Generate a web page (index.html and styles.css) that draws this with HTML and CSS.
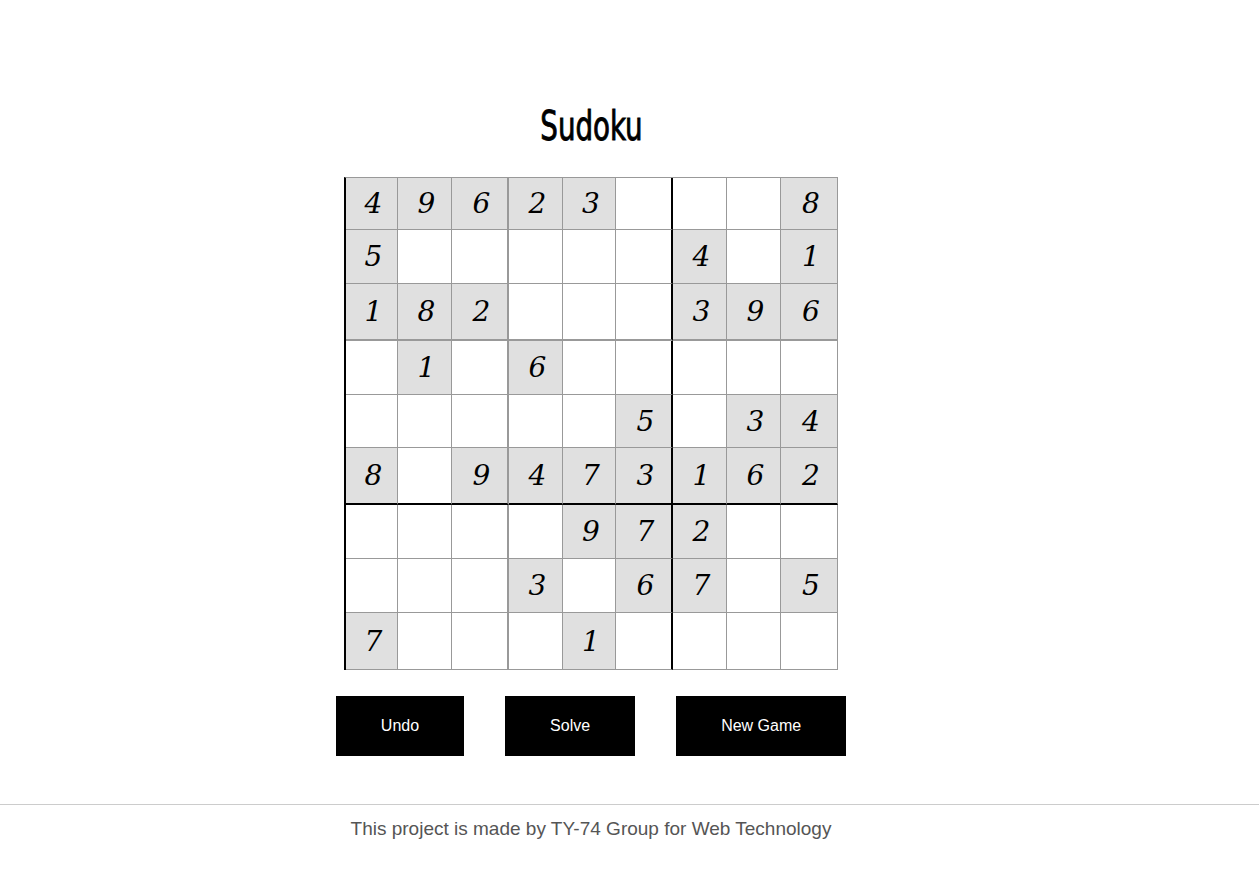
FILE: index.html
```html
<!DOCTYPE html>
<html lang="en">
<head>
<meta charset="utf-8">
<title>Sudoku</title>
<link rel="stylesheet" href="styles.css">
</head>
<body>
<main class="page">
  <h1 class="title">Sudoku</h1>
  <div class="board" id="board"></div>
  <div class="actions">
    <button class="btn">Undo</button>
    <button class="btn">Solve</button>
    <button class="btn">New Game</button>
  </div>
</main>
<footer class="footer">
  <p class="footer-text">This project is made by TY-74 Group for Web Technology</p>
</footer>
<script src="script.js"></script>
</body>
</html>
```

FILE: styles.css
```css
html, body {
  margin: 0;
  padding: 0;
  background: #fff;
}
body {
  font-family: "Liberation Sans", Arial, sans-serif;
}
.page {
  width: 1182px;
  display: flex;
  flex-direction: column;
  align-items: center;
  padding-top: 102px;
}
.title {
  margin: 0;
  height: 48px;
  line-height: 48px;
  font-family: "DejaVu Sans Condensed", "DejaVu Sans", sans-serif;
  font-stretch: condensed;
  font-weight: normal;
  font-size: 40px;
  color: #000;
  -webkit-text-stroke: 0.9px #000;
  transform: scaleX(0.77);
}
.board {
  margin-top: 27px;
  display: grid;
  grid-template-columns: 52px 54px 57px 54px 53px 57px 54px 54px 57px;
  grid-template-rows: 52px 54px 57px 54px 53px 57px 54px 54px 57px;
  border-left: 2px solid #000;
  border-top: 1px solid #999;
}
.cell {
  box-sizing: border-box;
  border-right: 1px solid #999;
  border-bottom: 1px solid #999;
  display: flex;
  align-items: center;
  justify-content: center;
  padding-left: 4px;
  font-family: "DejaVu Serif", "Liberation Serif", serif;
  font-style: italic;
  font-size: 28px;
  color: #000;
  background: #fff;
}
.cell.given {
  background: #e0e0e0;
}
.cell.col-2 { border-right: 2px solid #999; }
.cell.col-5 { border-right: 2px solid #000; }
.cell.row-2 { border-bottom: 2px solid #999; }
.cell.row-5 { border-bottom: 2px solid #000; }
.actions {
  margin-top: 26px;
  display: flex;
  gap: 41px;
}
.btn {
  height: 60px;
  padding: 0 45px;
  border: none;
  border-radius: 0;
  background: #000;
  color: #fff;
  font-family: "Liberation Sans", Arial, sans-serif;
  font-size: 16px;
}
.footer {
  margin-top: 48px;
  border-top: 1px solid #ccc;
}
.footer-text {
  width: 1182px;
  margin: 0;
  text-align: center;
  line-height: 48px;
  font-size: 19px;
  color: #555;
}
```

FILE: script.js
```js
const rows = [
  "49623...8",
  "5.....4.1",
  "182...396",
  ".1.6.....",
  ".....5.34",
  "8.9473162",
  "....972..",
  "...3.67.5",
  "7...1....",
];
const board = document.getElementById("board");
rows.forEach((row, r) => {
  [...row].forEach((ch, c) => {
    const cell = document.createElement("div");
    cell.className = "cell col-" + c + " row-" + r;
    if (ch !== ".") {
      cell.classList.add("given");
      cell.textContent = ch;
    }
    board.appendChild(cell);
  });
});
```
